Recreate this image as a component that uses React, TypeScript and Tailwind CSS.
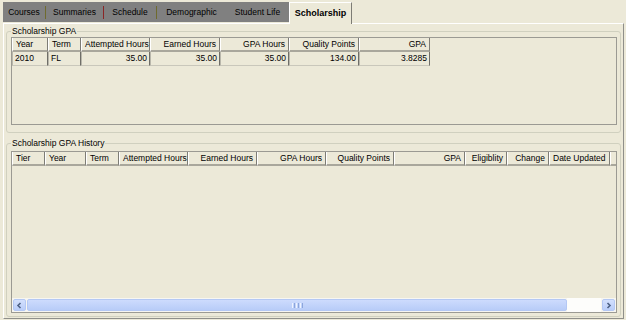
import React from "react";

type Col = { label: string; w: number; right?: boolean };

const cols1: Col[] = [
  { label: "Year", w: 36 },
  { label: "Term", w: 33 },
  { label: "Attempted Hours", w: 69 },
  { label: "Earned Hours", w: 70, right: true },
  { label: "GPA Hours", w: 69, right: true },
  { label: "Quality Points", w: 70, right: true },
  { label: "GPA", w: 71, right: true },
];

const row1 = ["2010", "FL", "35.00", "35.00", "35.00", "134.00", "3.8285"];
const row1Right = [false, false, true, true, true, true, true];

const cols2: Col[] = [
  { label: "Tier", w: 33 },
  { label: "Year", w: 41 },
  { label: "Term", w: 33 },
  { label: "Attempted Hours", w: 69 },
  { label: "Earned Hours", w: 69, right: true },
  { label: "GPA Hours", w: 69, right: true },
  { label: "Quality Points", w: 68, right: true },
  { label: "GPA", w: 71, right: true },
  { label: "Eligiblity", w: 42, right: true },
  { label: "Change", w: 42, right: true },
  { label: "Date Updated", w: 61 },
];

function HeaderCell({ c }: { c: Col }) {
  return (
    <div
      style={{ width: c.w }}
      className={`h-[14px] shrink-0 flex items-center px-[3px] bg-[#ece9d8] border-l border-l-white border-r border-r-[#7d7c75] border-b-2 border-b-[#a9a79c] whitespace-nowrap overflow-hidden ${
        c.right ? "justify-end" : "justify-start"
      }`}
    >
      {c.label}
    </div>
  );
}

function ScrollBtn({ dir }: { dir: "l" | "r" }) {
  return (
    <div className="w-[15px] h-full p-[1px] shrink-0">
      <div className="w-full h-full rounded-[2px] border border-[#b4c8f4] bg-gradient-to-b from-[#d3e0fd] to-[#b9cdf9] flex items-center justify-center">
        <svg width="7" height="7" viewBox="0 0 7 7">
          {dir === "l" ? (
            <polyline points="4.5,1 2,3.5 4.5,6" fill="none" stroke="#4d6185" strokeWidth="1.6" />
          ) : (
            <polyline points="2.5,1 5,3.5 2.5,6" fill="none" stroke="#4d6185" strokeWidth="1.6" />
          )}
        </svg>
      </div>
    </div>
  );
}

export default function App() {
  const tabs: { label: string; w: number; sep?: string }[] = [
    { label: "Courses", w: 42, sep: "#6f6b2e" },
    { label: "Summaries", w: 57, sep: "#8a2626" },
    { label: "Schedule", w: 52, sep: "#6f6b2e" },
    { label: "Demographic", w: 69 },
    { label: "Student Life", w: 63 },
  ];
  return (
    <div className="w-[626px] h-[320px] bg-[#ece9d8] font-['Liberation_Sans',Arial,sans-serif] text-[8.5px] leading-[11px] text-black overflow-hidden pt-[2px]">
      {/* tab strip */}
      <div className="flex items-end h-[21px] ml-[3px]">
        <div className="flex h-[20px] mb-[1px] bg-[#808080] items-center">
          {tabs.map((t) => (
            <React.Fragment key={t.label}>
              <div style={{ width: t.w }} className="h-full flex items-center justify-center whitespace-nowrap">
                {t.label}
              </div>
              {t.sep && <div style={{ backgroundColor: t.sep }} className="w-px h-[13px]" />}
            </React.Fragment>
          ))}
        </div>
        <div className="relative z-10 h-[22px] w-[63px] -mb-[1px] bg-[#ece9d8] border-t border-l border-white border-r border-r-[#7d7c75] flex items-center justify-center font-bold text-[9px]">
          Scholarship
        </div>
      </div>

      {/* panel */}
      <div className="ml-[3px] w-[621px] h-[296px] border border-t-white border-l-white border-r-[#8f8f8a] border-b-[#8f8f8a] px-[2px]">
        {/* groupbox 1 */}
        <fieldset className="mt-[2px] h-[107px] border border-[#d0d0bf] rounded-[3px] pl-[4px] pr-[3px] pb-[6px]">
          <legend className="px-[1px] leading-[11px]">Scholarship GPA</legend>
          <div className="h-[88px] border border-[#9b9a93]">
            <div className="flex">
              {cols1.map((c) => (
                <HeaderCell key={c.label} c={c} />
              ))}
            </div>
            <div className="flex">
              {cols1.map((c, i) => (
                <div
                  key={c.label}
                  style={{ width: c.w }}
                  className={`h-[14px] shrink-0 flex items-center px-[2px] border-l border-l-[#b9b7ab] border-r border-r-[#6f6e68] border-b border-b-[#c9c7bb] ${
                    row1Right[i] ? "justify-end" : "justify-start"
                  }`}
                >
                  {row1[i]}
                </div>
              ))}
            </div>
          </div>
        </fieldset>

        {/* groupbox 2 */}
        <fieldset className="mt-[5px] h-[179px] border border-[#d0d0bf] rounded-[3px] pl-[4px] pr-[3px] pb-[4px]">
          <legend className="px-[1px] leading-[11px]">Scholarship GPA History</legend>
          <div className="mt-[2px] h-[162px] border border-[#9b9a93] flex flex-col">
            <div className="flex">
              {cols2.map((c) => (
                <HeaderCell key={c.label} c={c} />
              ))}
              <div className="flex-1 h-[14px] bg-[#ece9d8] border-l border-l-white border-b-2 border-b-[#a9a79c]" />
            </div>
            <div className="flex-1" />
            <div className="h-[14px] flex bg-[#f7f6f1]">
              <ScrollBtn dir="l" />
              <div className="w-[540px] h-full py-[1px]">
                <div className="w-full h-full rounded-[2px] border border-[#b4c8f4] bg-gradient-to-b from-[#cddbfd] to-[#b8ccf8] flex items-center justify-center gap-[1px]">
                  <div className="w-px h-[5px] bg-[#eef3fe]" />
                  <div className="w-px h-[5px] bg-[#8ca6dc]" />
                  <div className="w-px h-[5px] bg-[#eef3fe]" />
                  <div className="w-px h-[5px] bg-[#8ca6dc]" />
                  <div className="w-px h-[5px] bg-[#eef3fe]" />
                  <div className="w-px h-[5px] bg-[#8ca6dc]" />
                </div>
              </div>
              <div className="flex-1 bg-[#fdfdfb]" />
              <ScrollBtn dir="r" />
            </div>
          </div>
        </fieldset>
      </div>
    </div>
  );
}
